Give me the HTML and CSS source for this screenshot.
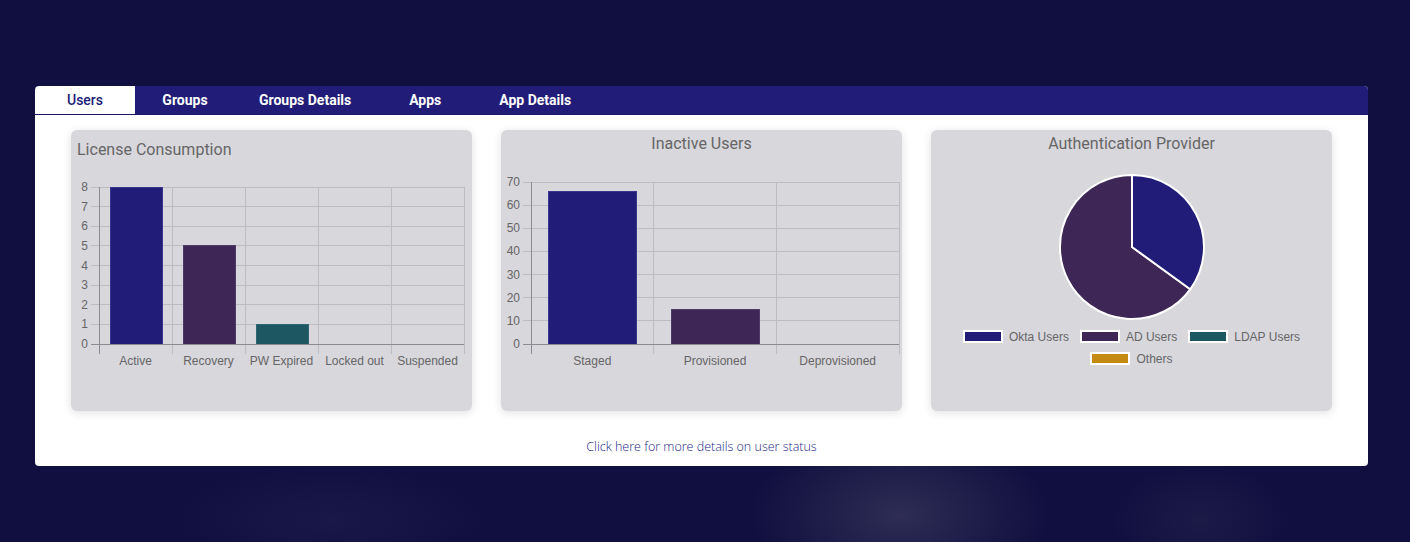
FILE: index.html
```html
<!DOCTYPE html>
<html lang="en">
<head>
<meta charset="utf-8">
<title>Users dashboard</title>
<link rel="stylesheet" href="styles.css">
</head>
<body>
<div class="page">
  <section class="panel">
    <nav class="tabs">
      <a class="tab active">Users</a>
      <a class="tab">Groups</a>
      <a class="tab">Groups Details</a>
      <a class="tab">Apps</a>
      <a class="tab">App Details</a>
    </nav>
    <div class="content">
      <div class="cards">
        <div class="card">
          <div class="card-title left">License Consumption</div>
          <svg class="chart" width="401" height="240" viewBox="0 0 401 240">
            <g class="grid">
              <line x1="20" y1="27" x2="393" y2="27"/>
              <line x1="20" y1="46.6" x2="393" y2="46.6"/>
              <line x1="20" y1="66.3" x2="393" y2="66.3"/>
              <line x1="20" y1="85.9" x2="393" y2="85.9"/>
              <line x1="20" y1="105.5" x2="393" y2="105.5"/>
              <line x1="20" y1="125.1" x2="393" y2="125.1"/>
              <line x1="20" y1="144.8" x2="393" y2="144.8"/>
              <line x1="20" y1="164.4" x2="393" y2="164.4"/>
              <line x1="101" y1="27" x2="101" y2="194"/>
              <line x1="174" y1="27" x2="174" y2="194"/>
              <line x1="247" y1="27" x2="247" y2="194"/>
              <line x1="320" y1="27" x2="320" y2="194"/>
              <line x1="393" y1="27" x2="393" y2="194"/>
            </g>
            <g class="bars">
              <rect class="c1" x="39.5" y="27" width="52" height="157"/>
              <rect class="c2" x="112.5" y="85.9" width="52" height="98.1"/>
              <rect class="c3" x="185.5" y="164.4" width="52" height="19.6"/>
            </g>
            <g class="axis">
              <line x1="28" y1="27" x2="28" y2="194"/>
              <line x1="20" y1="184" x2="393" y2="184"/>
            </g>
            <g class="ylab">
              <text x="17" y="27">8</text>
              <text x="17" y="46.6">7</text>
              <text x="17" y="66.3">6</text>
              <text x="17" y="85.9">5</text>
              <text x="17" y="105.5">4</text>
              <text x="17" y="125.1">3</text>
              <text x="17" y="144.8">2</text>
              <text x="17" y="164.4">1</text>
              <text x="17" y="184">0</text>
            </g>
            <g class="xlab">
              <text x="64.5" y="201">Active</text>
              <text x="137.5" y="201">Recovery</text>
              <text x="210.5" y="201">PW Expired</text>
              <text x="283.5" y="201">Locked out</text>
              <text x="356.5" y="201">Suspended</text>
            </g>
          </svg>
        </div>
        <div class="card">
          <div class="card-title">Inactive Users</div>
          <svg class="chart" width="401" height="240" viewBox="0 0 401 240">
            <g class="grid">
              <line x1="22" y1="28" x2="398" y2="28"/>
              <line x1="22" y1="51.1" x2="398" y2="51.1"/>
              <line x1="22" y1="74.3" x2="398" y2="74.3"/>
              <line x1="22" y1="97.4" x2="398" y2="97.4"/>
              <line x1="22" y1="120.6" x2="398" y2="120.6"/>
              <line x1="22" y1="143.7" x2="398" y2="143.7"/>
              <line x1="22" y1="166.9" x2="398" y2="166.9"/>
              <line x1="152.7" y1="28" x2="152.7" y2="200"/>
              <line x1="275.3" y1="28" x2="275.3" y2="200"/>
              <line x1="398" y1="28" x2="398" y2="200"/>
            </g>
            <g class="bars">
              <rect class="c1" x="47.5" y="37.3" width="88" height="152.7"/>
              <rect class="c2" x="170.5" y="155.3" width="88" height="34.7"/>
            </g>
            <g class="axis">
              <line x1="30" y1="28" x2="30" y2="200"/>
              <line x1="22" y1="190" x2="398" y2="190"/>
            </g>
            <g class="ylab">
              <text x="19" y="28">70</text>
              <text x="19" y="51.1">60</text>
              <text x="19" y="74.3">50</text>
              <text x="19" y="97.4">40</text>
              <text x="19" y="120.6">30</text>
              <text x="19" y="143.7">20</text>
              <text x="19" y="166.9">10</text>
              <text x="19" y="190">0</text>
            </g>
            <g class="xlab">
              <text x="91.3" y="207">Staged</text>
              <text x="214" y="207">Provisioned</text>
              <text x="336.7" y="207">Deprovisioned</text>
            </g>
          </svg>
        </div>
        <div class="card">
          <div class="card-title">Authentication Provider</div>
          <svg class="pie" width="401" height="176" viewBox="0 0 401 176">
            <path class="c2 slice" d="M201,93 L259.25,135.3 A72,72 0 1 1 201,21 Z"/>
            <path class="c1 slice" d="M201,93 L201,21 A72,72 0 0 1 259.25,135.3 Z"/>
          </svg>
          <ul class="legend">
            <li><span class="swatch c1"></span>Okta Users</li>
            <li><span class="swatch c2"></span>AD Users</li>
            <li><span class="swatch c3"></span>LDAP Users</li>
            <li><span class="swatch c4"></span>Others</li>
          </ul>
        </div>
      </div>
      <a class="more">Click here for more details on user status</a>
    </div>
  </section>
</div>
</body>
</html>
```

FILE: styles.css
```css
html, body {
  margin: 0;
  padding: 0;
}

body {
  width: 1410px;
  height: 542px;
  overflow: hidden;
  background-color: #100f3f;
  background-image:
    radial-gradient(ellipse 150px 90px at 900px 515px, rgba(52, 50, 88, 0.85), rgba(16, 15, 63, 0) 100%),
    radial-gradient(ellipse 90px 60px at 1200px 520px, rgba(40, 38, 80, 0.5), rgba(16, 15, 63, 0) 100%),
    radial-gradient(ellipse 160px 60px at 330px 520px, rgba(36, 34, 82, 0.45), rgba(16, 15, 63, 0) 100%);
  font-family: Roboto, "Liberation Sans", Arial, sans-serif;
}

.page {
  padding: 86px 42px 0 35px;
}

.panel {
  background: #ffffff;
  border-radius: 4px;
  height: 380px;
  overflow: hidden;
}

.tabs {
  display: flex;
  height: 28px;
  background: #211c77;
  border-bottom: 1px solid #1b1766;
}

.tab {
  min-width: 100px;
  padding: 0 24px;
  box-sizing: border-box;
  display: flex;
  align-items: center;
  justify-content: center;
  color: #ffffff;
  font-size: 14px;
  font-weight: 700;
  cursor: pointer;
}

.tab.active {
  background: #ffffff;
  color: #211c77;
  font-weight: 500;
  border-top-left-radius: 4px;
}

.content {
  padding: 15px 36px 0;
  display: flex;
  flex-direction: column;
  align-items: center;
}

.cards {
  display: grid;
  grid-template-columns: repeat(3, 401px);
  gap: 29px;
  width: 100%;
}

.card {
  height: 281px;
  background: #d8d7dc;
  border-radius: 6px;
  box-shadow: 0 2px 10px rgba(0, 0, 0, 0.12);
  overflow: hidden;
}

.card-title {
  margin-top: 4px;
  height: 20px;
  line-height: 20px;
  font-size: 16px;
  color: #666666;
  text-align: center;
}

.card-title.left {
  margin-top: 10px;
  padding-left: 6px;
  text-align: left;
}

.chart, .pie {
  display: block;
}

.grid line {
  stroke: #bdbcc1;
  stroke-width: 1;
  shape-rendering: crispEdges;
}

.axis line {
  stroke: #8c8b91;
  stroke-width: 1;
  shape-rendering: crispEdges;
}

.bars rect {
  stroke-width: 1;
  shape-rendering: crispEdges;
}

.bars .c1 { fill: #201c77; stroke: #3a3690; }
.bars .c2 { fill: #3e2756; stroke: #4f3b66; }
.bars .c3 { fill: #1c5762; stroke: #2f6670; }

.ylab text {
  font-family: "Liberation Sans", Arial, sans-serif;
  font-size: 12px;
  fill: #666666;
  text-anchor: end;
  dominant-baseline: central;
}

.xlab text {
  font-family: "Liberation Sans", Arial, sans-serif;
  font-size: 12px;
  fill: #666666;
  text-anchor: middle;
  dominant-baseline: central;
}

.slice {
  stroke: #ffffff;
  stroke-width: 2;
  stroke-linejoin: round;
}

.slice.c1 { fill: #201c77; }
.slice.c2 { fill: #3e2756; }

.legend {
  list-style: none;
  margin: 0 auto;
  padding: 0;
  max-width: 360px;
  display: flex;
  flex-wrap: wrap;
  justify-content: center;
  column-gap: 11px;
  row-gap: 9px;
}

.legend li {
  display: flex;
  align-items: center;
  height: 13px;
  font-family: "Liberation Sans", Arial, sans-serif;
  font-size: 12px;
  color: #666666;
}

.swatch {
  width: 40px;
  height: 13px;
  box-sizing: border-box;
  border: 2px solid #ffffff;
  margin-right: 6px;
}

.swatch.c1 { background: #201c77; }
.swatch.c2 { background: #3e2756; }
.swatch.c3 { background: #1c5762; }
.swatch.c4 { background: #c48a12; }

.more {
  margin-top: 27px;
  font-family: "Open Sans", "Noto Sans", sans-serif;
  font-weight: 300;
  font-size: 12.5px;
  color: #241f8a;
  cursor: pointer;
}
```
